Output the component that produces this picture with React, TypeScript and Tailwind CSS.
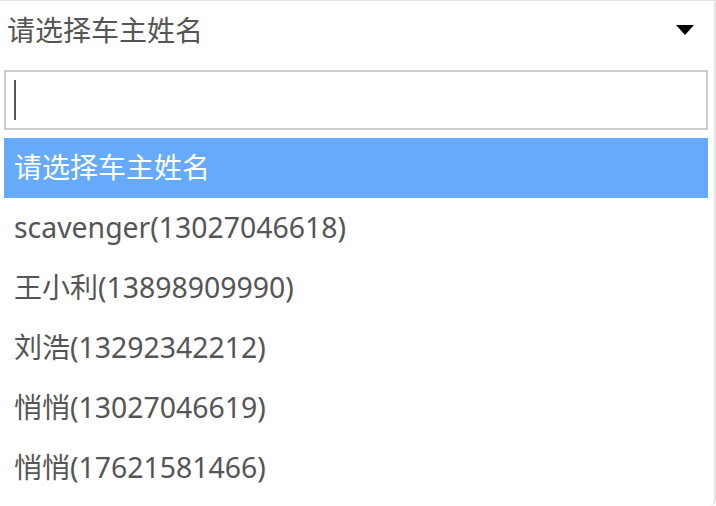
import React from 'react';

const OPTIONS = [
  '请选择车主姓名',
  'scavenger(13027046618)',
  '王小利(13898909990)',
  '刘浩(13292342212)',
  '悄悄(13027046619)',
  '悄悄(17621581466)',
];

const FONT = "font-['Noto_Sans','Noto_Sans_CJK_SC',sans-serif]";

// latin runs render a touch larger than the CJK ones in the original
function Label({ text }: { text: string }) {
  const parts = text.split(/([\x00-\x7f]+)/).filter(Boolean);
  return (
    <>
      {parts.map((p, i) =>
        /^[\x00-\x7f]+$/.test(p) ? (
          <span key={i} className="text-[28.4px]">{p}</span>
        ) : (
          <span key={i}>{p}</span>
        )
      )}
    </>
  );
}

export default function App() {
  return (
    <div className={`w-[716px] h-[506px] bg-white ${FONT} overflow-hidden`}>
      <div className="h-full border-t border-r-2 border-[#e4e4e4] rounded-br-[6px] pr-[6px]">
        {/* select header */}
        <div className="h-[62px] flex items-center justify-between pl-[7px] pr-[14px]">
          <span className="text-[28px] text-[#555555] leading-none mb-[4px]">请选择车主姓名</span>
          <svg width="18" height="10" viewBox="0 0 18 10" className="mb-[4px]">
            <polygon points="0,0 18,0 9,10" fill="#000" />
          </svg>
        </div>

        {/* search box */}
        <div className="pl-[4px] pt-[7px] pb-[8px]">
          <div className="h-[60px] border-2 border-[#cccccc] flex items-center pl-[8px]">
            <div className="w-[2px] h-[40px] bg-[#555555]" />
          </div>
        </div>

        {/* options */}
        <ul className="pl-[4px]">
          {OPTIONS.map((opt, i) => (
            <li
              key={i}
              className={`h-[60px] flex items-center pl-[10px] text-[28px] leading-none ${
                i === 0 ? 'bg-[#66aaf9] text-white' : 'text-[#555555]'
              }`}
            >
              <span className="mb-[2px]">
                <Label text={opt} />
              </span>
            </li>
          ))}
        </ul>
      </div>
    </div>
  );
}
